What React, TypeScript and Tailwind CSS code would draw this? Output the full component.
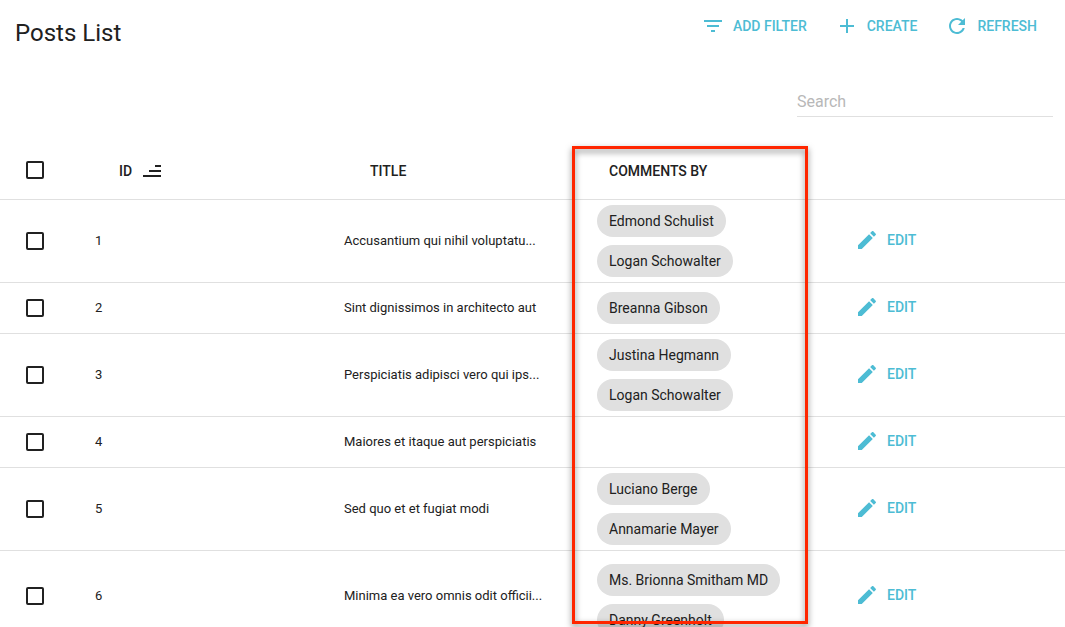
import type { ReactNode } from "react";
import { clsx } from "clsx";

type Post = { id: number; title: string; commenters: string[]; cell: string };

const posts: Post[] = [
  { id: 1, title: "Accusantium qui nihil voluptatu...", commenters: ["Edmond Schulist", "Logan Schowalter"], cell: "py-[5px]" },
  { id: 2, title: "Sint dignissimos in architecto aut", commenters: ["Breanna Gibson"], cell: "py-[9px]" },
  { id: 3, title: "Perspiciatis adipisci vero qui ips...", commenters: ["Justina Hegmann", "Logan Schowalter"], cell: "py-[5px]" },
  { id: 4, title: "Maiores et itaque aut perspiciatis", commenters: [], cell: "py-[9px]" },
  { id: 5, title: "Sed quo et et fugiat modi", commenters: ["Luciano Berge", "Annamarie Mayer"], cell: "py-[5px]" },
  { id: 6, title: "Minima ea vero omnis odit officii...", commenters: ["Ms. Brionna Smitham MD", "Danny Greenholt"], cell: "pt-[13px] pb-1" },
];

const icons = {
  filter: "M10 18h4v-2h-4v2zM3 6v2h18V6H3zm3 7h12v-2H6v2z",
  add: "M19 13h-6v6h-2v-6H5v-2h6V5h2v6h6v2z",
  refresh:
    "M17.65 6.35C16.2 4.9 14.21 4 12 4c-4.42 0-7.99 3.58-7.99 8s3.57 8 7.99 8c3.73 0 6.84-2.55 7.73-6h-2.08c-.82 2.33-3.04 4-5.65 4-3.31 0-6-2.69-6-6s2.69-6 6-6c1.66 0 3.14.69 4.22 1.78L13 11h7V4l-2.35 2.35z",
  sort: "M15 6h6v2h-6zM9 11h12v2H9zM3 16h18v2H3z",
  edit: "M3 17.25V21h3.75L17.81 9.94l-3.75-3.75L3 17.25zM20.71 7.04c.39-.39.39-1.02 0-1.41l-2.34-2.34c-.39-.39-1.02-.39-1.41 0l-1.83 1.83 3.75 3.75 1.83-1.83z",
};

function Icon({ path }: { path: string }) {
  return (
    <svg viewBox="0 0 24 24" className="size-6 shrink-0 fill-current" aria-hidden="true">
      <path d={path} />
    </svg>
  );
}

const action = "flex h-9 items-center gap-2 pl-3 pr-4 text-sm font-medium uppercase text-[#4dbcd4]";

function Action({ icon, children }: { icon: string; children: ReactNode }) {
  return (
    <button type="button" className={action}>
      <Icon path={icon} />
      {children}
    </button>
  );
}

function Checkbox({ label }: { label: string }) {
  return (
    <input
      type="checkbox"
      aria-label={label}
      className="block size-[18px] appearance-none rounded-xs border-2 border-[#212121] checked:bg-[#4dbcd4]"
    />
  );
}

export default function App() {
  return (
    <main className="h-screen overflow-hidden bg-white font-[Roboto,sans-serif] text-[#212121]">
      <header className="flex items-start justify-between pt-2 pr-3 pl-[15px]">
        <h1 className="pt-[7px] text-2xl leading-9">Posts List</h1>
        <div className="flex">
          <Action icon={icons.filter}>Add filter</Action>
          <Action icon={icons.add}>Create</Action>
          <Action icon={icons.refresh}>Refresh</Action>
        </div>
      </header>
      <div className="flex justify-end pt-[35px] pr-3 pb-[25px]">
        <input
          type="search"
          aria-label="Search"
          placeholder="Search"
          className="h-[31px] w-64 border-b border-[#e0e0e0] text-base outline-none placeholder:text-[#b8b8b8]"
        />
      </div>
      <table className="w-full table-fixed border-separate border-spacing-0 text-left text-[13px]">
        <colgroup>
          <col className="w-[71px]" />
          <col className="w-[249px]" />
          <col className="w-[253px]" />
          <col className="w-[248px]" />
          <col />
        </colgroup>
        <thead>
          <tr className="h-[58px] text-sm *:border-b *:border-[#e0e0e0] *:p-0 *:font-medium">
            <th>
              <div className="pb-px pl-[26px]">
                <Checkbox label="Select all posts" />
              </div>
            </th>
            <th>
              <button type="button" className="ml-12 flex items-center gap-2">
                ID
                <Icon path={icons.sort} />
              </button>
            </th>
            <th>
              <button type="button" className="ml-[50px] block">
                TITLE
              </button>
            </th>
            <th className="relative">
              <span className="block pl-9">COMMENTS BY</span>
              <div className="pointer-events-none absolute top-1 right-[13px] -left-px h-[478px] border-3 border-[#ff2600] drop-shadow-[0_3px_3px_rgba(0,0,0,0.5)]" />
            </th>
            <th aria-label="Actions" />
          </tr>
        </thead>
        <tbody>
          {posts.map((post) => (
            <tr key={post.id} className="*:border-b *:border-[#e0e0e0]">
              <td className="pl-[26px]">
                <Checkbox label={`Select post ${post.id}`} />
              </td>
              <td className="px-6">{post.id}</td>
              <td className="truncate pl-6">{post.title}</td>
              <td className={clsx("px-6", post.cell)}>
                <div className="flex min-h-8 flex-col items-start gap-2">
                  {post.commenters.map((name) => (
                    <span key={name} className="h-8 rounded-full bg-[#e0e0e0] px-3 text-sm leading-8 whitespace-nowrap">
                      {name}
                    </span>
                  ))}
                </div>
              </td>
              <td className="pb-0.5 pl-[22px]">
                <a href={`#/posts/${post.id}`} className="flex h-6 w-fit items-center gap-2 pl-3 text-sm font-medium text-[#4dbcd4]">
                  <Icon path={icons.edit} />
                  EDIT
                </a>
              </td>
            </tr>
          ))}
        </tbody>
      </table>
    </main>
  );
}
